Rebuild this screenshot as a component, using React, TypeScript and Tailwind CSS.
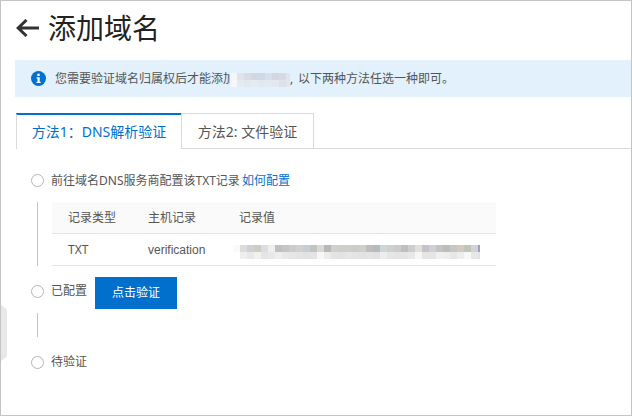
const font = { fontFamily: '"Noto Sans", "Noto Sans CJK SC", sans-serif' };

// mosaic colours for the blurred-out domain and record value
const domainTop = ["#f4f6f9", "#dfe4ea", "#d5dde6", "#d3d8dc", "#cfd9e6", "#d8dfe8", "#d2d8e0", "#d5dbe3", "#dfe5ec"];
const domainBottom = ["#f4f7fb", "#e6ebf0", "#e2e8ef", "#e6ebf0", "#e1e8f0", "#e4e9ef", "#e3e8ee", "#dde2e8", "#e0e6ec"];
const valueTop = [
  "#fafaf6", "#dcdcdc", "#cfcfd6", "#cdcdc2", "#dcdde2", "#f0efea", "#bfbfc0", "#c5c5c5", "#cccccc", "#d0d0d0",
  "#c6ced4", "#c2c4c4", "#d8d8d8", "#b8b8b6", "#d2cfcd", "#d0cecc", "#cfcfca", "#cdcdc8", "#d2cecd", "#bebebe",
  "#b6babc", "#cdd6d8", "#cfcfcf", "#cbcbcb", "#bebebe", "#cdcdcd", "#e2deda", "#c4c2cc", "#d4ced2", "#c4c2c4",
  "#bcbcb8", "#c6c6c4", "#d2cabc", "#c2c4b8", "#ccd6d4", "#a898c8",
];
const valueBottom = [
  "#ffffff", "#eeeeec", "#e6e8f0", "#f2f2ec", "#e6e4e6", "#e8e8e8", "#eeeeec", "#e8e8e8", "#e6e6e6", "#e4e4e4",
  "#e2e2e2", "#e4e4e6", "#f6f8f6", "#eeece8", "#e4e4e4", "#e2e2e2", "#e6e6e6", "#e4e4e4", "#e2e2e2", "#e4e4e4",
  "#e2e2e2", "#eceeee", "#e6e6e6", "#e4e4e4", "#e4e6e6", "#e8e8e8", "#f6f6f6", "#e8e4e2", "#e4e6e6", "#f0f0f0",
  "#eeeeec", "#e8e6e6", "#eeeeee", "#f8f8f6", "#e6e8e8", "#e0e2ee",
];

function Mosaic({ top, bottom, className }: { top: string[]; bottom: string[]; className: string }) {
  return (
    <span className={"flex flex-col overflow-hidden " + className}>
      {[top, bottom].map((row, i) => (
        <span key={i} className="flex">
          {row.map((c, j) => (
            <span key={j} className="h-[7px] w-[7px] shrink-0" style={{ backgroundColor: c }} />
          ))}
        </span>
      ))}
    </span>
  );
}

function Radio() {
  return <span className="h-[13px] w-[13px] shrink-0 rounded-full border border-[#b5b5b5] bg-white" />;
}

export default function App() {
  return (
    <div
      style={font}
      className="relative h-[416px] w-[632px] overflow-hidden border border-[#c4c4c4] bg-white text-[12px] text-[#555555]"
    >
      {/* side handle */}
      <div className="absolute left-0 top-[304px] h-[56px] w-[6px] bg-[#e8e8e8] [clip-path:polygon(0_0,100%_8%,100%_92%,0_100%)]" />

      <div className="flex h-[59px] items-center pb-[6px] pl-[15px]">
        <svg width="24" height="18" viewBox="0 0 24 18" fill="none" stroke="#333333" strokeWidth="3">
          <path d="M23 9H2.5M10.5 1 2.2 9l8.3 8" />
        </svg>
        <h1 className="ml-[8px] text-[28px] leading-none text-[#222222]">添加域名</h1>
      </div>

      <div className="ml-[14px] flex h-[37px] items-center bg-[#e2f1fc] pl-[16px]">
        <svg width="15" height="15" viewBox="0 0 15 15">
          <circle cx="7.5" cy="7.5" r="7.5" fill="#0070cc" />
          <rect x="6.3" y="2.7" width="2.4" height="2.3" fill="#fff" />
          <path d="M5.5 6.2h3.2v4.6h1v1.3H5.5v-1.3h1V7.5h-1z" fill="#fff" />
        </svg>
        <span className="ml-[9px] w-[175px] whitespace-nowrap">您需要验证域名归属权后才能添加</span>
        <Mosaic top={domainTop} bottom={domainBottom} className="relative mt-[2px] w-[60px]" />
        <span className="w-[8px]">,</span>
        <span>以下两种方法任选一种即可。</span>
      </div>

      <div className="mt-[16px] flex h-[36px] pl-[15px]">
        <div className="flex w-[165px] items-center justify-center border-l border-t-2 border-l-[#d9d9d9] border-t-[#0070cc] bg-white pb-[1px] text-[14px] text-[#0070cc]">
          方法1：DNS解析验证
        </div>
        <div className="flex w-[133px] items-center justify-center border border-[#d9d9d9] text-[14px]">
          方法2: 文件验证
        </div>
        <div className="flex-1 border-b border-[#d9d9d9]" />
      </div>

      <div className="ml-[30px] mt-[18px] flex h-[26px] items-center gap-[7px]">
        <Radio />
        <span className="pt-px">
          前往域名DNS服务商配置该TXT记录 <span className="-ml-px text-[#0070cc]">如何配置</span>
        </span>
      </div>

      <div className="ml-[36px] mt-[9px] flex">
        <div className="w-px bg-[#c4c4c4]" />
        <div className="ml-[14px] w-[444px]">
          <div className="flex h-[32px] items-center border-b border-[#e6e6e6] bg-[#fafafa] pl-[16px] pt-px">
            <span className="w-[80px]">记录类型</span>
            <span className="w-[91px]">主机记录</span>
            <span>记录值</span>
          </div>
          <div className="flex h-[32px] items-center border-b border-[#e6e6e6] pl-[16px] pt-px">
            <span className="w-[80px]">TXT</span>
            <span className="w-[85px] font-['Liberation_Sans']">verification</span>
            <Mosaic top={valueTop} bottom={valueBottom} className="mt-[4px] w-[247px]" />
          </div>
        </div>
      </div>

      <div className="ml-[30px] mt-[11px] flex h-[32px] items-start">
        <div className="flex h-[28px] items-center gap-[7px]">
          <Radio />
          <span>已配置</span>
        </div>
        <button className="ml-[8px] h-[32px] w-[82px] bg-[#0070cc] text-[12px] text-white">点击验证</button>
      </div>

      <div className="ml-[36px] mt-[4px] h-[24px] w-px bg-[#c4c4c4]" />

      <div className="ml-[30px] mt-[12px] flex h-[26px] items-center gap-[7px]">
        <Radio />
        <span>待验证</span>
      </div>
    </div>
  );
}
